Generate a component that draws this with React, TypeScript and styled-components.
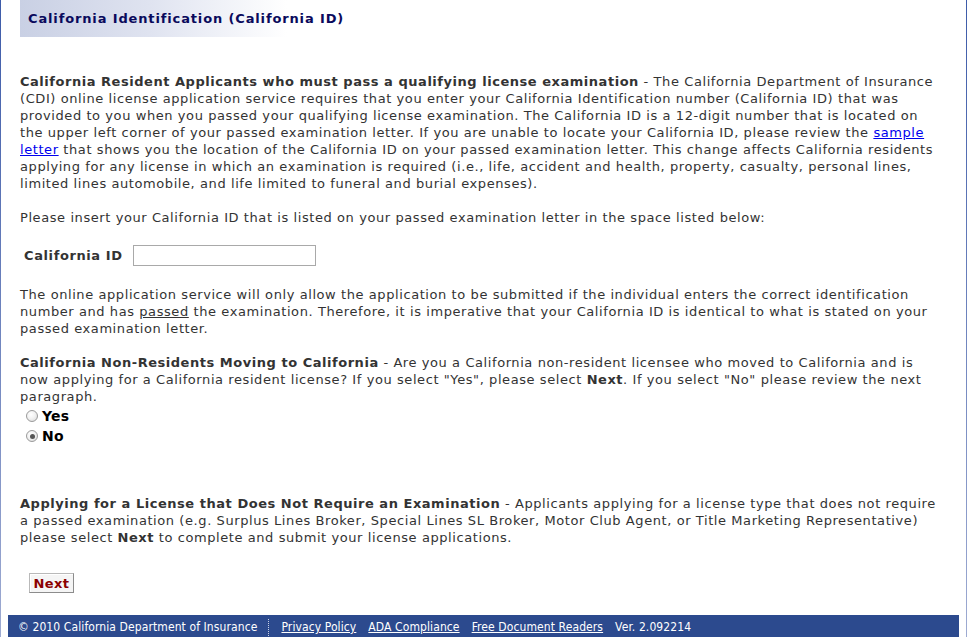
import React from "react";
import styled, { createGlobalStyle } from "styled-components";

const Global = createGlobalStyle`
  html, body { margin: 0; padding: 0; background: #fff; }
  body { font-family: "DejaVu Sans", Verdana, sans-serif; }
`;

const Frame = styled.div`
  width: 967px;
  height: 637px;
  box-sizing: border-box;
  border-style: solid;
  border-width: 0 1px;
  border-image: linear-gradient(to bottom, #3d5ba9, #9eabd2) 1;
  display: flex;
  flex-direction: column;
  overflow: hidden;
`;

const Content = styled.div`
  padding: 0 26px 0 19px;
  display: flex;
  flex-direction: column;
  color: #333;
  font-size: 13px;
  line-height: 17px;
  letter-spacing: 0.58px;
`;

const TitleBar = styled.div`
  height: 37px;
  display: flex;
  align-items: center;
  padding-left: 8px;
  background: linear-gradient(to right, #c9d0e4 0%, #dfe3f0 14%, #ffffff 29%);
  font-weight: bold;
  font-size: 13px;
  color: #0a0a5c;
  letter-spacing: 0.86px;
`;

const Para = styled.p<{ $top: number }>`
  margin: ${(p) => p.$top}px 0 0 0;
`;

const Strong = styled.b`
  color: #333;
  letter-spacing: 0.53px;
`;

const Link = styled.a`
  color: #0000ee;
  text-decoration: underline;
`;

const U = styled.span`
  text-decoration: underline;
`;

const IdRow = styled.div`
  display: flex;
  align-items: center;
  gap: 10px;
  margin-top: 19px;
  padding-left: 4px;
`;

const IdLabel = styled.label`
  font-weight: bold;
  color: #333;
  letter-spacing: 0.6px;
`;

const IdInput = styled.input`
  width: 183px;
  height: 21px;
  box-sizing: border-box;
  border: 1px solid #a9a9a9;
  padding: 1px 2px;
  font-size: 13px;
`;

const RadioGroup = styled.div`
  display: flex;
  flex-direction: column;
  padding-left: 5px;
  margin-top: 1px;
`;

const RadioRow = styled.label`
  display: flex;
  align-items: center;
  height: 20px;
  font-weight: bold;
  font-size: 14px;
  letter-spacing: 0.2px;
  color: #000;
`;

const Radio = styled.input`
  appearance: none;
  width: 12px;
  height: 12px;
  margin: 0 4px 0 1px;
  border-radius: 50%;
  border: 1px solid #9a9a9a;
  background: radial-gradient(circle at 40% 35%, #ffffff 0%, #f2f2f2 45%, #d6d6d6 100%);
  box-sizing: border-box;
  position: relative;
  flex-shrink: 0;
  &:checked::after {
    content: "";
    position: absolute;
    left: 2.5px;
    top: 2.5px;
    width: 5px;
    height: 5px;
    border-radius: 50%;
    background: #555;
  }
`;

const NextButton = styled.button`
  align-self: flex-start;
  margin: 27px 0 0 9px;
  width: 45px;
  height: 20px;
  padding: 0;
  background: #f5f5f5;
  border: 1px solid #b9b9b9;
  border-right-color: #8c8c8c;
  border-bottom-color: #8c8c8c;
  box-shadow: inset 1px 1px 0 #fff;
  font-family: "DejaVu Sans", Verdana, sans-serif;
  font-weight: bold;
  font-size: 13px;
  letter-spacing: 0.4px;
  color: #8b0000;
`;

const Footer = styled.div`
  margin: 22px 7px 0 7px;
  height: 24px;
  background: #2c4a8e;
  display: flex;
  align-items: center;
  padding-left: 10px;
  color: #fff;
  font-family: "DejaVu Sans Condensed", "DejaVu Sans", Tahoma, sans-serif;
  font-size: 12px;
  letter-spacing: 0.1px;
  flex-shrink: 0;
`;

const Copy = styled.span`
  padding-right: 11px;
  border-right: 1px dotted #c8d0e6;
  margin-right: 12px;
  line-height: 17px;
`;

const FootLink = styled.a`
  color: #fff;
  text-decoration: underline;
  margin-right: 12px;
`;

const Ver = styled.span`
  color: #fff;
`;

export default function App() {
  return (
    <>
      <Global />
      <Frame>
        <Content>
          <TitleBar>California Identification (California ID)</TitleBar>
          <Para $top={36}>
            <Strong>California Resident Applicants who must pass a qualifying license examination</Strong> - The
            California Department of Insurance (CDI) online license application service requires that you enter your
            California Identification number (California ID) that was provided to you when you passed your qualifying
            license examination. The California ID is a 12-digit number that is located on the upper left corner of
            your passed examination letter. If you are unable to locate your California ID, please review the{" "}
            <Link href="#">sample letter</Link> that shows you the location of the California ID on your passed
            examination letter. This change affects California residents applying for any license in which an
            examination is required (i.e., life, accident and health, property, casualty, personal lines, limited lines
            automobile, and life limited to funeral and burial expenses).
          </Para>
          <Para $top={17}>
            Please insert your California ID that is listed on your passed examination letter in the space listed
            below:
          </Para>
          <IdRow>
            <IdLabel htmlFor="caid">California ID</IdLabel>
            <IdInput id="caid" type="text" />
          </IdRow>
          <Para $top={20}>
            The online application service will only allow the application to be submitted if the individual enters
            the correct identification number and has <U>passed</U> the examination. Therefore, it is imperative that
            your California ID is identical to what is stated on your passed examination letter.
          </Para>
          <Para $top={17}>
            <Strong>California Non-Residents Moving to California</Strong> - Are you a California non-resident
            licensee who moved to California and is now applying for a California resident license? If you select
            "Yes", please select <Strong>Next</Strong>. If you select "No" please review the next paragraph.
          </Para>
          <RadioGroup>
            <RadioRow>
              <Radio type="radio" name="nr" value="yes" />
              Yes
            </RadioRow>
            <RadioRow>
              <Radio type="radio" name="nr" value="no" defaultChecked />
              No
            </RadioRow>
          </RadioGroup>
          <Para $top={49}>
            <Strong>Applying for a License that Does Not Require an Examination</Strong> - Applicants applying for a
            license type that does not require a passed examination (e.g. Surplus Lines Broker, Special Lines SL
            Broker, Motor Club Agent, or Title Marketing Representative) please select <Strong>Next</Strong> to
            complete and submit your license applications.
          </Para>
          <NextButton type="button">Next</NextButton>
        </Content>
        <Footer>
          <Copy>© 2010 California Department of Insurance</Copy>
          <FootLink href="#">Privacy Policy</FootLink>
          <FootLink href="#">ADA Compliance</FootLink>
          <FootLink href="#">Free Document Readers</FootLink>
          <Ver>Ver. 2.092214</Ver>
        </Footer>
      </Frame>
    </>
  );
}
